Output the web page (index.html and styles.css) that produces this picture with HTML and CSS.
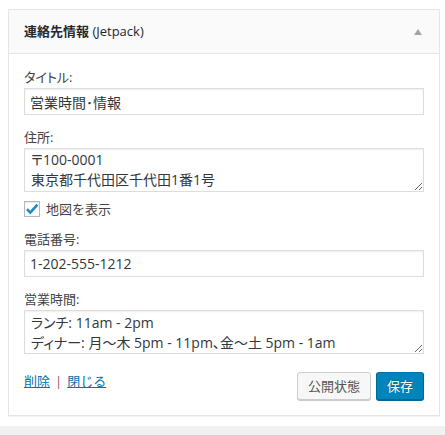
FILE: index.html
```html
<!DOCTYPE html>
<html lang="ja">
<head>
<meta charset="utf-8">
<title>連絡先情報</title>
<link rel="stylesheet" href="styles.css">
</head>
<body>
<div class="page">
  <div class="widget">
    <div class="widget-top">
      <h3 class="widget-title"><span class="title-jp">連絡先情報</span> <span class="title-sub">(Jetpack)</span></h3>
      <span class="toggle"></span>
    </div>
    <div class="widget-inside">
      <div class="field">
        <label class="field-label" for="f-title">タイトル:</label>
        <input class="text-input" id="f-title" type="text" value="営業時間･情報">
      </div>
      <div class="field">
        <label class="field-label" for="f-address">住所:</label>
        <textarea class="text-area addr" id="f-address">〒100-0001
東京都千代田区千代田1番1号</textarea>
      </div>
      <div class="check-row">
        <span class="checkbox"><svg width="14" height="14" viewBox="0 0 14 14"><path d="M2 7.2 L5.3 10.6 L12.4 2.6" fill="none" stroke="#1e8cbe" stroke-width="2.6" stroke-linecap="butt" stroke-linejoin="miter"/></svg></span>
        <span class="check-label">地図を表示</span>
      </div>
      <div class="field">
        <label class="field-label" for="f-phone">電話番号:</label>
        <input class="text-input" id="f-phone" type="text" value="1-202-555-1212">
      </div>
      <div class="field">
        <label class="field-label" for="f-hours">営業時間:</label>
        <textarea class="text-area hours" id="f-hours">ランチ: 11am - 2pm
ディナー: 月〜木 5pm - 11pm、金〜土 5pm - 1am</textarea>
      </div>
      <div class="actions">
        <div class="links"><a href="#" class="link">削除</a><span class="sep">|</span><a href="#" class="link">閉じる</a></div>
        <div class="buttons">
          <button class="btn btn-secondary" type="button">公開状態</button>
          <button class="btn btn-primary" type="button">保存</button>
        </div>
      </div>
    </div>
  </div>
</div>
</body>
</html>
```

FILE: styles.css
```css
html, body {
  margin: 0;
  padding: 0;
}
body {
  background: #f1f1f1;
  font-family: "Open Sans", "Noto Sans CJK JP", sans-serif;
  font-size: 13px;
  color: #444;
}
.page {
  background: #fff;
  padding: 9px 5px 10px 8px;
  box-shadow: 0 1px 1px rgba(0, 0, 0, 0.04);
}
.widget {
  border: 1px solid #e5e5e5;
  background: #fff;
  box-shadow: 0 1px 1px rgba(0, 0, 0, 0.04);
}
.widget-top {
  display: flex;
  align-items: center;
  justify-content: space-between;
  height: 43px;
  padding: 0 17px 0 15px;
  background: #fafafa;
  border-bottom: 1px solid #e5e5e5;
}
.widget-title {
  margin: 0;
  font-size: 13px;
  line-height: 15px;
  color: #23282d;
  font-weight: normal;
}
.title-jp {
  font-weight: 700;
}
.title-sub {
  font-weight: 400;
}
.toggle {
  width: 0;
  height: 0;
  border-left: 4px solid transparent;
  border-right: 4px solid transparent;
  border-bottom: 6px solid #a0a5aa;
}
.widget-inside {
  padding: 1px 15px 15px;
}
.field {
  margin-top: 13px;
}
.field-label {
  display: block;
  line-height: 19px;
  font-size: 13px;
  color: #444;
  font-feature-settings: "palt";
}
.text-input,
.text-area {
  display: block;
  box-sizing: border-box;
  width: 100%;
  margin: 1px 0 0;
  border: 1px solid #ddd;
  box-shadow: inset 0 1px 2px rgba(0, 0, 0, 0.07);
  background: #fff;
  color: #32373c;
  font-family: "Open Sans", "Noto Sans CJK JP", sans-serif;
  font-size: 14px;
  font-feature-settings: "palt";
  outline: none;
}
.text-input {
  height: 27px;
  padding: 3px 5px;
}
.text-area {
  height: 44px;
  padding: 1px 6px;
  line-height: 20px;
  overflow: hidden;
  resize: vertical;
}
.text-area.hours {
  padding-top: 2px;
}
.check-row {
  display: flex;
  align-items: center;
  height: 17px;
  margin-top: 8px;
}
.checkbox {
  box-sizing: border-box;
  width: 16px;
  height: 16px;
  border: 1px solid #b4b9be;
  background: #fff;
  box-shadow: inset 0 1px 2px rgba(0, 0, 0, 0.1);
  display: flex;
  align-items: center;
  justify-content: center;
}
.check-label {
  margin-left: 6px;
  font-size: 13px;
  color: #444;
}
.actions {
  display: flex;
  justify-content: space-between;
  align-items: flex-start;
  margin-top: 18px;
}
.links {
  line-height: 18px;
  font-size: 13px;
}
.link {
  color: #0073aa;
  text-decoration: underline;
}
.sep {
  color: #a8506f;
  margin: 0 5px;
}
.buttons {
  display: flex;
  gap: 5px;
}
.btn {
  box-sizing: border-box;
  height: 28px;
  line-height: 26px;
  padding: 0 10px;
  border-radius: 3px;
  font-family: "Open Sans", "Noto Sans CJK JP", sans-serif;
  font-size: 13px;
  cursor: pointer;
}
.btn-secondary {
  background: #f7f7f7;
  border: 1px solid #ccc;
  box-shadow: 0 1px 0 #ccc;
  color: #555;
}
.btn-primary {
  background: #0085ba;
  border: 1px solid;
  border-color: #0073aa #006799 #006799;
  box-shadow: 0 1px 0 #006799;
  color: #fff;
  text-shadow: 0 -1px 1px #006799;
}
```
